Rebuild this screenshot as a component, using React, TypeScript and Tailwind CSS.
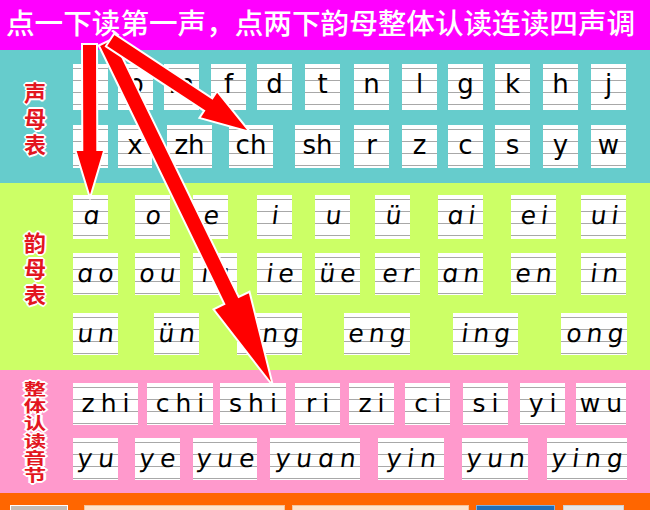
import React from "react";

type Card = [string, string, string];

const s1r1: Card[] = [
  ["b", "w-[35px]", "ml-[3px]"],
  ["p", "w-[35px]", "ml-[10px]"],
  ["m", "w-[35px]", "ml-[11px]"],
  ["f", "w-[35px]", "ml-[12px]"],
  ["d", "w-[35px]", "ml-[11px]"],
  ["t", "w-[35px]", "ml-[13px]"],
  ["n", "w-[35px]", "ml-[14px]"],
  ["l", "w-[35px]", "ml-[13px]"],
  ["g", "w-[35px]", "ml-[11px]"],
  ["k", "w-[35px]", "ml-[12px]"],
  ["h", "w-[35px]", "ml-[13px]"],
  ["j", "w-[35px]", "ml-[13px]"],
];
const s1r2: Card[] = [
  ["q", "w-[35px]", "ml-[3px]"],
  ["x", "w-[34px]", "ml-[10px]"],
  ["zh", "w-[45px]", "ml-[15px]"],
  ["ch", "w-[44px]", "ml-[17px]"],
  ["sh", "w-[45px]", "ml-[22px]"],
  ["r", "w-[35px]", "ml-[14px]"],
  ["z", "w-[35px]", "ml-[13px]"],
  ["c", "w-[35px]", "ml-[11px]"],
  ["s", "w-[35px]", "ml-[12px]"],
  ["y", "w-[35px]", "ml-[13px]"],
  ["w", "w-[35px]", "ml-[13px]"],
];
const s2r1: Card[] = [
  ["ɑ", "w-[35px]", "ml-[3px]"],
  ["o", "w-[35px]", "ml-[27px]"],
  ["e", "w-[35px]", "ml-[23px]"],
  ["i", "w-[35px]", "ml-[29px]"],
  ["u", "w-[35px]", "ml-[23px]"],
  ["ü", "w-[35px]", "ml-[25px]"],
  ["ɑi", "w-[45px]", "ml-[28px]"],
  ["ei", "w-[45px]", "ml-[28px]"],
  ["ui", "w-[45px]", "ml-[25px]"],
];
const s2r2: Card[] = [
  ["ɑo", "w-[45px]", "ml-[3px]"],
  ["ou", "w-[45px]", "ml-[17px]"],
  ["iu", "w-[44px]", "ml-[13px]"],
  ["ie", "w-[45px]", "ml-[20px]"],
  ["üe", "w-[45px]", "ml-[13px]"],
  ["er", "w-[45px]", "ml-[15px]"],
  ["ɑn", "w-[45px]", "ml-[18px]"],
  ["en", "w-[45px]", "ml-[28px]"],
  ["in", "w-[45px]", "ml-[25px]"],
];
const s2r3: Card[] = [
  ["un", "w-[45px]", "ml-[3px]"],
  ["ün", "w-[45px]", "ml-[36px]"],
  ["ɑng", "w-[65px]", "ml-[38px]"],
  ["eng", "w-[66px]", "ml-[42px]"],
  ["ing", "w-[65px]", "ml-[43px]"],
  ["ong", "w-[66px]", "ml-[43px]"],
];
const s3r1: Card[] = [
  ["zhi", "w-[65px]", "ml-[3px]"],
  ["chi", "w-[66px]", "ml-[9px]"],
  ["shi", "w-[66px]", "ml-[7px]"],
  ["ri", "w-[45px]", "ml-[9px]"],
  ["zi", "w-[45px]", "ml-[9px]"],
  ["ci", "w-[45px]", "ml-[11px]"],
  ["si", "w-[45px]", "ml-[13px]"],
  ["yi", "w-[45px]", "ml-[12px]"],
  ["wu", "w-[50px]", "ml-[11px]"],
];
const s3r2: Card[] = [
  ["yu", "w-[45px]", "ml-[3px]"],
  ["ye", "w-[45px]", "ml-[17px]"],
  ["yue", "w-[64px]", "ml-[13px]"],
  ["yuɑn", "w-[90px]", "ml-[13px]"],
  ["yin", "w-[66px]", "ml-[18px]"],
  ["yun", "w-[66px]", "ml-[18px]"],
  ["ying", "w-[80px]", "ml-[19px]"],
];

const lines =
  "bg-[linear-gradient(to_bottom,#fff_4px,#a8a8a8_4px,#a8a8a8_5px,#fff_5px,#fff_16px,#a8a8a8_16px,#a8a8a8_17px,#fff_17px,#fff_28px,#a8a8a8_28px,#a8a8a8_29px,#fff_29px,#fff_40px,#a8a8a8_40px,#a8a8a8_41px,#fff_41px)]";

function Row({ cards, h, text, span }: { cards: Card[]; h: string; text: string; span: string }) {
  return (
    <div className="flex">
      {cards.map(([t, w, ml], i) => (
        <div
          key={i}
          className={`${w} ${ml} ${h} ${lines} shrink-0 flex justify-center pt-[8px] leading-[25px] text-black ${text}`}
        >
          <span className={`inline-block ${span}`}>{t}</span>
        </div>
      ))}
    </div>
  );
}

const labelCls =
  "font-['Noto_Sans_CJK_SC',sans-serif] font-bold text-[#e3161f] [text-shadow:1px_1px_0_#fff,-1px_-1px_0_#fff,1px_-1px_0_#fff,-1px_1px_0_#fff,0_2px_0_#fff,0_-2px_0_#fff,2px_0_0_#fff,-2px_0_0_#fff] flex flex-col items-center";

function arrowPts(sx: number, sy: number, tx: number, ty: number, w: number, L: number, H: number) {
  const dx = tx - sx;
  const dy = ty - sy;
  const len = Math.hypot(dx, dy);
  const ux = dx / len;
  const uy = dy / len;
  const nx = -uy;
  const ny = ux;
  const bx = tx - ux * L;
  const by = ty - uy * L;
  const p = [
    [sx + (nx * w) / 2, sy + (ny * w) / 2],
    [bx + (nx * w) / 2, by + (ny * w) / 2],
    [bx + (nx * H) / 2, by + (ny * H) / 2],
    [tx, ty],
    [bx - (nx * H) / 2, by - (ny * H) / 2],
    [bx - (nx * w) / 2, by - (ny * w) / 2],
    [sx - (nx * w) / 2, sy - (ny * w) / 2],
  ];
  return p.map((q) => q.map((v) => v.toFixed(1)).join(",")).join(" ");
}

const pinyin = "font-['DejaVu_Sans',sans-serif]";

export default function App() {
  return (
    <div className="relative w-[650px] h-[510px] overflow-hidden bg-[#ff6600]">
      <div className="h-[50px] bg-[#ff00ff] pl-[6px] pt-[7px] leading-[29px] text-[28.6px] font-medium text-white whitespace-nowrap font-['Noto_Sans_CJK_SC',sans-serif]">
        点一下读第一声，点两下韵母整体认读连读四声调
      </div>

      <div className="h-[133px] bg-[#66cccc] flex">
        <div className="w-[70px] shrink-0 flex items-center justify-center">
          <div className={`${labelCls} text-[22px] leading-[26px]`}>
            <span>声</span>
            <span>母</span>
            <span>表</span>
          </div>
        </div>
        <div className="flex flex-col pt-[14px] gap-[15px]">
          <Row cards={s1r1} h="h-[46px]" text={`${pinyin} text-[26px]`} span="" />
          <Row cards={s1r2} h="h-[43px]" text={`${pinyin} text-[26px]`} span="" />
        </div>
      </div>

      <div className="h-[187px] bg-[#ccff66] flex">
        <div className="w-[70px] shrink-0 flex items-center justify-center pb-[20px]">
          <div className={`${labelCls} text-[22px] leading-[26px]`}>
            <span>韵</span>
            <span>母</span>
            <span>表</span>
          </div>
        </div>
        <div className="flex flex-col pt-[12px]">
          <Row cards={s2r1} h="h-[44px]" text={`${pinyin} text-[25px] tracking-[5px] pl-[5px]`} span="-skew-x-[7deg]" />
          <div className="h-[14px]" />
          <Row cards={s2r2} h="h-[42px]" text={`${pinyin} text-[25px] tracking-[5px] pl-[5px]`} span="-skew-x-[7deg]" />
          <div className="h-[18px]" />
          <Row cards={s2r3} h="h-[42px]" text={`${pinyin} text-[25px] tracking-[5px] pl-[5px]`} span="-skew-x-[7deg]" />
        </div>
      </div>

      <div className="h-[123px] bg-[#ff99cc] flex">
        <div className="w-[70px] shrink-0 flex items-center justify-center">
          <div className={`${labelCls} text-[16px] leading-[17.2px] scale-x-[1.4]`}>
            <span>整</span>
            <span>体</span>
            <span>认</span>
            <span>读</span>
            <span>音</span>
            <span>节</span>
          </div>
        </div>
        <div className="flex flex-col pt-[13px] gap-[13px]">
          <Row cards={s3r1} h="h-[42px]" text={`${pinyin} text-[25px] tracking-[6px] pl-[6px]`} span="" />
          <Row cards={s3r2} h="h-[42px]" text={`${pinyin} text-[25px] tracking-[6px] pl-[6px]`} span="-skew-x-[7deg]" />
        </div>
      </div>

      <div className="h-[17px] bg-[#ff6600] flex items-start pt-[12px]">
        <div className="ml-[10px] w-[58px] h-[20px] shrink-0 bg-[#c4bdb6] border border-white" />
        <div className="ml-[16px] w-[201px] h-[20px] shrink-0 bg-[#fde3cc] border border-[#f4c39a]" />
        <div className="ml-[7px] w-[177px] h-[20px] shrink-0 bg-[#fde3cc] border border-[#f4c39a]" />
        <div className="ml-[7px] w-[79px] h-[20px] shrink-0 bg-[#236fb6] border border-[#7fb0e0]" />
        <div className="ml-[8px] w-[61px] h-[20px] shrink-0 bg-[#e6e6e6] border border-[#cfcfcf]" />
      </div>

      <svg className="absolute left-0 top-0 w-[650px] h-[510px] pointer-events-none" viewBox="0 0 650 510">
        <polygon points={arrowPts(106, 42, 273, 386, 16, 95, 40)} fill="#ff0000" stroke="#ffffff" strokeWidth="2" strokeLinejoin="miter" />
        <polygon points={arrowPts(110, 40, 250, 132, 15, 50, 32)} fill="#ff0000" stroke="#ffffff" strokeWidth="2" strokeLinejoin="miter" />
        <polygon points={arrowPts(89.5, 44, 90, 198, 15, 48, 29)} fill="#ff0000" stroke="#ffffff" strokeWidth="2" strokeLinejoin="miter" />
      </svg>
    </div>
  );
}
